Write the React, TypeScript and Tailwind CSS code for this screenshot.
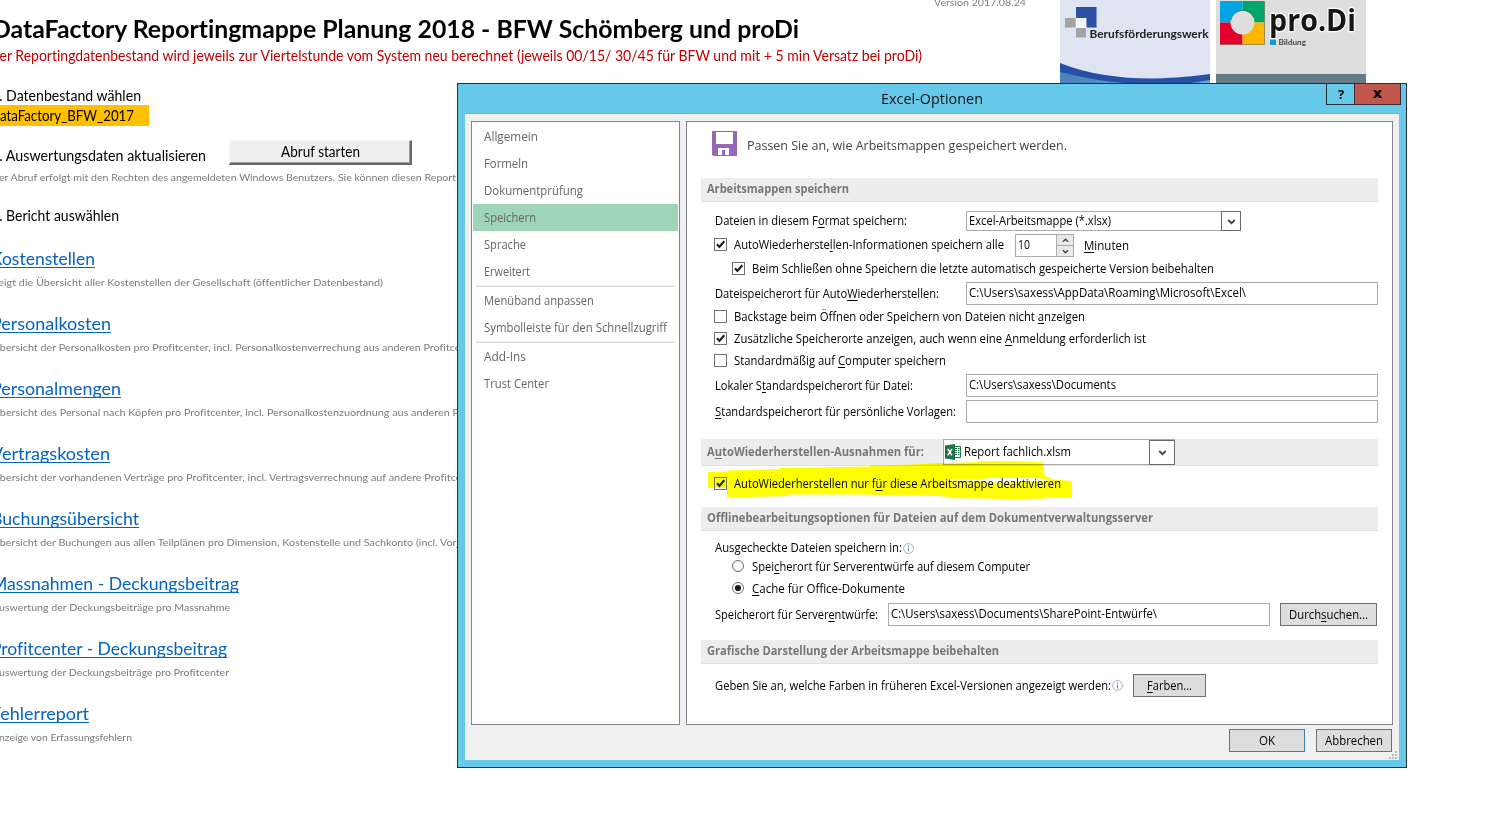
import { useLayoutEffect, useRef, useState } from "react";
import type { ReactNode } from "react";

const UI = "font-['Open_Sans','Noto_Sans',sans-serif]";
const SHEET = "font-[Lato,'Open_Sans',sans-serif] [font-variant-ligatures:none]";

/** One line of text set to an exact width; "&" marks the access key that follows it. */
function T({ w, children, className = "" }: { w: number; children: string; className?: string }) {
  const ref = useRef<HTMLSpanElement>(null);
  const [scale, setScale] = useState(1);
  useLayoutEffect(() => {
    const natural = ref.current?.getBoundingClientRect().width ?? 0;
    if (natural > 0) setScale(w / natural);
  }, [w]);
  const at = children.indexOf("&");
  return (
    <span className={`inline-block shrink-0 whitespace-pre ${className}`} style={{ width: w }}>
      <span ref={ref} className="inline-block origin-left" style={scale === 1 ? undefined : { transform: `scaleX(${scale})` }}>
        {at < 0 ? (
          children
        ) : (
          <>
            {children.slice(0, at)}
            <span className="underline decoration-1 underline-offset-2">{children[at + 1]}</span>
            {children.slice(at + 2)}
          </>
        )}
      </span>
    </span>
  );
}

const REPORTS: { title: string; tw: number; text: string; dw: number }[] = [
  { title: "Kostenstellen", tw: 104, text: "Zeigt die Übersicht aller Kostenstellen der Gesellschaft (öffentlicher Datenbestand)", dw: 391 },
  { title: "Personalkosten", tw: 120, text: "Übersicht der Personalkosten pro Profitcenter, incl. Personalkostenverrechung aus anderen Profitcentern", dw: 494 },
  { title: "Personalmengen", tw: 130, text: "Übersicht des Personal nach Köpfen pro Profitcenter, incl. Personalkostenzuordnung aus anderen Profitcentern", dw: 523 },
  { title: "Vertragskosten", tw: 119, text: "Übersicht der vorhandenen Verträge pro Profitcenter, incl. Vertragsverrechnung auf andere Profitcenter", dw: 489 },
  { title: "Buchungsübersicht", tw: 148, text: "Übersicht der Buchungen aus allen Teilplänen pro Dimension, Kostenstelle und Sachkonto (incl. Vorjahr)", dw: 485 },
  { title: "Massnahmen - Deckungsbeitrag", tw: 248, text: "Auswertung der Deckungsbeiträge pro Massnahme", dw: 238 },
  { title: "Profitcenter - Deckungsbeitrag", tw: 236, text: "Auswertung der Deckungsbeiträge pro Profitcenter", dw: 237 },
  { title: "Fehlerreport", tw: 98, text: "Anzeige von Erfassungsfehlern", dw: 140 },
];

function Sheet() {
  return (
    <main className={`${SHEET} flex flex-col items-start text-[14.5px] leading-5 text-black`}>
      <h1 className="-ml-[8px] mt-[9px] h-[37px] text-[24px] font-bold leading-[39px]">
        <T w={807}>DataFactory Reportingmappe Planung 2018 - BFW Schömberg und proDi</T>
      </h1>
      <p className="-ml-[11px] h-5 text-[#c00000]">
        <T w={933}>Der Reportingdatenbestand wird jeweils zur Viertelstunde vom System neu berechnet (jeweils 00/15/ 30/45 für BFW und mit + 5 min Versatz bei proDi)</T>
      </p>
      <p className="-ml-[9px] mt-5 h-[19px]">
        <T w={150}>1. Datenbestand wählen</T>
      </p>
      <div className="h-[21px] w-[149px] bg-[#ffc000] leading-[21px]">
        <T w={144} className="-ml-[10px]">DataFactory_BFW_2017</T>
      </div>
      <div className="mt-[14px] flex h-[25px]">
        <T w={215} className="-ml-[9px] mt-[6px]">2. Auswertungsdaten aktualisieren</T>
        <button className="ml-[23px] h-[25px] w-[183px] border-b-2 border-r-2 border-l border-t border-b-[#696969] border-r-[#696969] border-l-[#f6f6f6] border-t-[#f6f6f6] bg-[#efefef] text-center leading-[22px] shadow-[inset_-1px_-1px_0_#a0a0a0]">
          <T w={79}>Abruf starten</T>
        </button>
      </div>
      <p className="-ml-[9px] mt-[2px] h-5 text-[10px] text-[#7a7a7a]">
        <T w={465}>Der Abruf erfolgt mit den Rechten des angemeldeten Windows Benutzers. Sie können diesen Report</T>
      </p>
      <p className="-ml-[9px] mt-[19px] h-5">
        <T w={128}>3. Bericht auswählen</T>
      </p>
      <ul className="mt-[23px]">
        {REPORTS.map((r) => (
          <li key={r.title} className="h-[65px]">
            <a className="-ml-[9px] block h-[19px] w-max border-b border-[#0563c1] text-[17px] leading-[19px] text-[#0563c1]">
              <T w={r.tw}>{r.title}</T>
            </a>
            <p className="-ml-[8px] mt-[4px] h-5 text-[10px] leading-5 text-[#7a7a7a]">
              <T w={r.dw}>{r.text}</T>
            </p>
          </li>
        ))}
      </ul>
    </main>
  );
}

function BfwLogo() {
  return (
    <svg width="150" height="84" viewBox="0 0 150 84">
      <defs>
        <linearGradient id="sky" x1="0" x2="1" y1="0" y2="0">
          <stop offset="0" stopColor="#4a82bd" />
          <stop offset="1" stopColor="#6fa3d2" />
        </linearGradient>
      </defs>
      <rect width="150" height="84" fill="#dfe4f2" />
      <path d="M0 63 C30 75 65 79 95 78.500 C115 78 135 76 150 74 V84 H0Z" fill="#2650a4" />
      <path d="M0 72 C20 77 45 82 75 84 H0Z M125 84 Q138 82 150 80 V84Z" fill="url(#sky)" />
      <path d="M16 7h20.500v20.500h-10v-9.500H16Z" fill="#2c51a5" />
      <rect x="16" y="18" width="10" height="10" fill="#f3f5fa" />
      <path d="M5 18h10.500v9.500H5ZM16 28h10v9.500H16Z" fill="#a3a3a3" />
      <text x="29.500" y="38" textLength="119" lengthAdjust="spacingAndGlyphs" fontSize="11.500" fontWeight="700" fill="#222" fontFamily="Lato">
        Berufsförderungswerk
      </text>
    </svg>
  );
}

function ProDiLogo() {
  return (
    <svg width="150" height="84" viewBox="0 0 150 84">
      <rect width="150" height="84" fill="#dedede" />
      <rect y="74" width="150" height="10" fill="#647b85" />
      <rect x="4" y="1" width="22.500" height="21.500" fill="#00a5e3" />
      <rect x="26.500" y="1" width="22" height="21.500" fill="#00a76a" />
      <rect x="4" y="22.500" width="22.500" height="22" fill="#e4002c" />
      <rect x="26.500" y="22.500" width="22" height="22" fill="#ffb600" />
      <path d="M4.500 44.500h44V1.500" fill="none" stroke="#5b5a3a" strokeOpacity=".55" />
      <circle cx="26.500" cy="22.500" r="12" fill="#dedede" />
      <path d="M15 20a12 12 0 0 1 22.500-3" fill="none" stroke="#23695d" strokeOpacity=".7" />
      <text x="53" y="31" textLength="87" lengthAdjust="spacingAndGlyphs" fontSize="31" fontWeight="700" fill="#161616" stroke="#fff" strokeWidth="2.500" paintOrder="stroke" fontFamily="Open Sans">
        pro.Di
      </text>
      <rect x="54" y="39.500" width="6" height="5.500" fill="#169ad6" />
      <text x="62.500" y="45" textLength="27.500" lengthAdjust="spacingAndGlyphs" fontSize="7.500" fontWeight="700" fill="#444" fontFamily="Lato">
        Bildung
      </text>
    </svg>
  );
}

function Check({ on = false, className = "" }: { on?: boolean; className?: string }) {
  return (
    <svg className={`shrink-0 ${className}`} width="13" height="13" viewBox="0 0 13 13">
      <rect x=".5" y=".5" width="12" height="12" fill="none" stroke="#707070" />
      {on && <path d="M3 6.300 5.400 8.900 10.300 3.300" fill="none" stroke="#1e1e1e" strokeWidth="2.200" />}
    </svg>
  );
}

function Radio({ on = false, className = "" }: { on?: boolean; className?: string }) {
  return (
    <svg className={`shrink-0 ${className}`} width="12" height="12" viewBox="0 0 12 12">
      <circle cx="6" cy="6" r="5.500" fill="#fff" stroke="#6c6c6c" />
      {on && <circle cx="6" cy="6" r="3.100" fill="#1c1c1c" />}
    </svg>
  );
}

function Info() {
  return (
    <svg className="shrink-0" width="11" height="11" viewBox="0 0 11 11">
      <circle cx="5.500" cy="5.500" r="4.900" fill="#fff" stroke="#8fb4dc" />
      <path d="M5.500 2.500v1.200M5.500 4.800v3.700" stroke="#5a86b8" />
    </svg>
  );
}

function Chevron({ up = false, size = 9 }: { up?: boolean; size?: number }) {
  return (
    <svg width={size} height={size} viewBox="0 0 9 9">
      <path d={up ? "M1.200 6 4.500 2.900 7.800 6" : "M1.200 3 4.500 6.200 7.800 3"} fill="none" stroke="#444" strokeWidth="1.800" />
    </svg>
  );
}

function Field({ className, children }: { className: string; children?: ReactNode }) {
  return <div className={`flex h-[23px] shrink-0 border border-[#ababaf] bg-white pl-[2px] leading-5 ${className}`}>{children}</div>;
}

function Button({ className, children }: { className: string; children: ReactNode }) {
  return <button className={`flex h-[23px] shrink-0 items-center justify-center border bg-[#dddddd] leading-none ${className}`}>{children}</button>;
}

function Section({ w, children, className = "" }: { w: number; children: string; className?: string }) {
  return (
    <h2 className={`h-6 w-[677px] border-b border-[#e0e0e0] bg-[#ededed] pl-[6px] font-bold leading-[22px] text-[#777777] ${className}`}>
      <T w={w}>{children}</T>
    </h2>
  );
}

const NAV: ([string, number] | null)[] = [
  ["Allgemein", 54],
  ["Formeln", 44],
  ["Dokumentprüfung", 99],
  ["Speichern", 52],
  ["Sprache", 42],
  ["Erweitert", 46],
  null,
  ["Menüband anpassen", 110],
  ["Symbolleiste für den Schnellzugriff", 183],
  null,
  ["Add-Ins", 42],
  ["Trust Center", 65],
];

function Sidebar() {
  return (
    <nav className="h-[604px] w-[209px] border border-[#82858f] bg-white p-px text-[#666666]">
      {NAV.map((item, i) =>
        item ? (
          <div key={item[0]} className={`h-[27px] pl-[11px] leading-[27px] ${item[0] === "Speichern" ? "bg-[#9fd5b7]" : ""}`}>
            <T w={item[1]}>{item[0]}</T>
          </div>
        ) : (
          <hr key={i} className="mx-[3px] h-[2px] border-b border-t border-b-[#dcdcdc] border-t-[#ededed]" />
        ),
      )}
    </nav>
  );
}

function SaveSettings() {
  return (
    <section className="flex h-[604px] w-[707px] flex-col border border-[#82858f] bg-white pl-[14px]">
      <header className="ml-[11px] mt-[9px] flex h-[25px] items-center gap-[10px] text-[#444444]">
        <svg width="25" height="25" viewBox="0 0 25 25">
          <path d="M0 0h25v25H1.500L0 23.500Z" fill="#9668b7" />
          <path d="M4 1h17v12H4Z M6 17h11v7h-4v-5h-3v5H6Z" fill="#fff" />
        </svg>
        <T w={320} className="pt-[3px] text-[13px] leading-5">Passen Sie an, wie Arbeitsmappen gespeichert werden.</T>
      </header>

      <Section w={142} className="mt-[22px]">Arbeitsmappen speichern</Section>

      <div className="ml-[14px] mt-[9px] flex h-5 items-center">
        <T w={192} className="mr-[59px]">Dateien in diesem F&ormat speichern:</T>
        <div className="flex h-5 w-[275px] border border-[#ababaf] pl-[2px]">
          <T w={142} className="leading-[18px]">Excel-Arbeitsmappe (*.xlsx)</T>
          <span className="-my-px -mr-px ml-auto flex w-5 items-center justify-center border border-[#6a6a6a]">
            <Chevron />
          </span>
        </div>
      </div>
      <div className="ml-[13px] mt-[3px] flex h-[23px] items-start">
        <Check on className="mt-[4px]" />
        <T w={270} className="ml-[7px] mr-[11px] leading-[22px]">AutoWiederherste&llen-Informationen speichern alle</T>
        <div className="flex h-[23px] w-[59px] border border-[#ababaf] pl-[2px]">
          <T w={12} className="leading-5">10</T>
          <span className="ml-auto flex w-[17px] flex-col border-l border-[#ababaf] bg-[#e9e9e9]">
            <span className="flex h-[10px] items-center justify-center"><Chevron up size={7} /></span>
            <span className="flex h-[11px] items-center justify-center border-t border-[#ababaf]"><Chevron size={7} /></span>
          </span>
        </div>
        <T w={45} className="ml-[10px] leading-6">&Minuten</T>
      </div>
      <div className="ml-[31px] mt-[3px] flex h-[18px] items-start leading-[18px]">
        <Check on className="mt-[2px]" />
        <T w={462} className="ml-[7px]">Beim Schließen ohne Speichern die letzte automatisch gespeicherte Version beibehalten</T>
      </div>
      <div className="ml-[14px] mt-[4px] flex h-[23px] leading-6">
        <T w={224} className="mr-[27px]">Dateispeicherort für Auto&Wiederherstellen:</T>
        <Field className="w-[412px]"><T w={277}>C:\Users\saxess\AppData\Roaming\Microsoft\Excel\</T></Field>
      </div>
      <div className="ml-[13px] mt-px flex h-[22px] leading-[22px]">
        <Check className="mt-[4px]" />
        <T w={351} className="ml-[7px]">Backstage beim Öffnen oder Speichern von Dateien nicht &anzeigen</T>
      </div>
      <div className="ml-[13px] flex h-[22px] leading-[22px]">
        <Check on className="mt-[4px]" />
        <T w={412} className="ml-[7px]">Zusätzliche Speicherorte anzeigen, auch wenn eine &Anmeldung erforderlich ist</T>
      </div>
      <div className="ml-[13px] flex h-[22px] leading-[22px]">
        <Check className="mt-[4px]" />
        <T w={212} className="ml-[7px]">Standardmäßig auf &Computer speichern</T>
      </div>
      <div className="ml-[14px] mt-[2px] flex h-[23px] leading-6">
        <T w={198} className="mr-[53px]">Lokaler S&tandardspeicherort für Datei:</T>
        <Field className="w-[412px]"><T w={147}>C:\Users\saxess\Documents</T></Field>
      </div>
      <div className="ml-[14px] mt-[3px] flex h-[23px] leading-6">
        <T w={241} className="mr-[10px]">&Standardspeicherort für persönliche Vorlagen:</T>
        <Field className="w-[412px]" />
      </div>

      <div className="mt-4 flex h-[27px] w-[677px] border-b border-[#e0e0e0] bg-[#ededed] pl-[6px] leading-[26px]">
        <T w={217} className="mr-[19px] font-bold text-[#777777]">A&utoWiederherstellen-Ausnahmen für:</T>
        <div className="flex h-[26px] w-[232px] items-center border border-[#ababaf] bg-white pl-px">
          <svg width="16" height="16" viewBox="0 0 16 16">
            <path d="M8.500 2.500h7v11h-7" fill="#fff" stroke="#1f7246" />
            <path d="M10 4.500h2M13 4.500h1.500M10 6.500h2M13 6.500h1.500M10 8.500h2M13 8.500h1.500M10 10.500h2M13 10.500h1.500" stroke="#1f7246" />
            <path d="M0 1.500 10 0v16L0 14.500Z" fill="#1f7246" />
            <path d="m2.700 4.800 4.300 6.500M7 4.800l-4.300 6.500" stroke="#fff" strokeWidth="1.500" />
          </svg>
          <T w={107} className="ml-[3px] leading-6">Report fachlich.xlsm</T>
          <span className="-mr-px ml-auto flex h-[25px] w-[26px] items-center justify-center border border-[#6a6a6a]">
            <Chevron />
          </span>
        </div>
      </div>
      <div className="relative ml-[13px] mt-[7px] flex h-[22px] leading-[22px]">
        <svg className="absolute -left-[6px] -top-[13px] mix-blend-multiply" width="365" height="40" viewBox="0 0 365 40">
          <path
            d="M0 12 19 11.500V10.500L72 9V8L162 6.500V5.500L206 4.500 226 3.500 272 2V1L320 1.500 335 2.500V12.500L338 16 345 19.500 364 21V37.500L338 37V38.500L304 39 242 38V37L229 36 150 34.500H82L81 36 39 37 19 37.500V28H0Z M234 19.500H272L282 18H328L342 20 334 21.500H306L304 22.500H276L270 21 234 20.500Z"
            fill="#ffff00"
            fillRule="evenodd"
          />
        </svg>
        <Check on className="relative mt-[4px]" />
        <T w={327} className="relative ml-[7px]">AutoWiederherstellen nur f&ür diese Arbeitsmappe deaktivieren</T>
      </div>

      <Section w={446} className="mt-[12px]">Offlinebearbeitungsoptionen für Dateien auf dem Dokumentverwaltungsserver</Section>

      <div className="ml-[14px] mt-[7px] flex h-5 items-center leading-5">
        <T w={187} className="mr-px">Ausgecheckte Dateien speichern in:</T>
        <Info />
      </div>
      <div className="ml-[31px] mt-[-2px] flex h-[22px] leading-[22px]">
        <Radio className="mt-[4px]" />
        <T w={278} className="ml-[8px]">Spei&cherort für Serverentwürfe auf diesem Computer</T>
      </div>
      <div className="ml-[31px] flex h-[22px] leading-[22px]">
        <Radio on className="mt-[4px]" />
        <T w={153} className="ml-[8px]">&Cache für Office-Dokumente</T>
      </div>
      <div className="ml-[14px] mt-[3px] flex h-[23px] leading-6">
        <T w={163} className="mr-[10px]">Speicherort für Server&entwürfe:</T>
        <Field className="w-[382px]"><T w={266}>C:\Users\saxess\Documents\SharePoint-Entwürfe\</T></Field>
        <Button className="ml-[10px] w-[97px] border-[#707070]"><T w={79}>Durch&suchen...</T></Button>
      </div>

      <Section w={292} className="mt-[14px]">Grafische Darstellung der Arbeitsmappe beibehalten</Section>

      <div className="ml-[14px] mt-[10px] flex h-[23px] items-center leading-6">
        <T w={396} className="mr-px">Geben Sie an, welche Farben in früheren Excel-Versionen angezeigt werden:</T>
        <Info />
        <Button className="ml-[10px] w-[73px] border-[#707070]"><T w={45}>&Farben...</T></Button>
      </div>
    </section>
  );
}

function OptionsDialog() {
  return (
    <div className={`${UI} absolute left-[457px] top-[83px] flex h-[685px] w-[950px] flex-col border border-[#2b2d35] bg-[#66c9ea] px-[7px] pb-[7px] text-[12px] text-black`}>
      <div className="relative flex h-[29px] shrink-0 justify-center">
        <T w={102} className="text-[14px] leading-[29px] text-[#111]">Excel-Optionen</T>
        <div className="absolute -right-[2px] -top-px flex h-[22px]">
          <button className="flex w-[28px] items-center justify-center border border-r-0 border-[#2b2d35] pl-px text-[13px] font-bold leading-none">?</button>
          <button className="flex w-[47px] items-center justify-center border border-[#3b2a30] bg-[#c1564d]">
            <svg width="9" height="8" viewBox="0 0 9 8">
              <path d="M0 0h3l1.500 2.300L6 0h3L6.200 4 9 8H6L4.500 5.700 3 8H0L2.800 4Z" fill="#0c0c0c" />
            </svg>
          </button>
        </div>
      </div>
      <div className="relative flex h-[647px] shrink-0 flex-col border-t border-[#8fa9b8] bg-[#f0f0f0] pl-[6px]">
        <div className="mt-[7px] flex gap-[6px]">
          <Sidebar />
          <SaveSettings />
        </div>
        <div className="mr-[7px] mt-[4px] flex justify-end gap-[11px]">
          <Button className="w-[76px] border-[#3c7fb1]"><T w={16}>OK</T></Button>
          <Button className="w-[76px] border-[#707070]"><T w={58}>Abbrechen</T></Button>
        </div>
        <svg className="absolute bottom-px right-[2px]" width="8" height="8" viewBox="0 0 8 8">
          <path d="M6 0h2v2H6ZM3 3h2v2H3ZM6 3h2v2H6ZM0 6h2v2H0ZM3 6h2v2H3ZM6 6h2v2H6Z" fill="#bdbdbd" />
        </svg>
      </div>
    </div>
  );
}

export default function App() {
  return (
    <div className="relative h-[818px] w-[1487px] overflow-hidden bg-white">
      <Sheet />
      <div className={`${SHEET} absolute left-[934px] top-[-8px] text-[10px] leading-5 text-[#7f7f7f]`}>
        <T w={92}>Version 2017.08.24</T>
      </div>
      <div className="absolute left-[1060px] top-0 flex gap-[6px]">
        <BfwLogo />
        <ProDiLogo />
      </div>
      <OptionsDialog />
    </div>
  );
}
